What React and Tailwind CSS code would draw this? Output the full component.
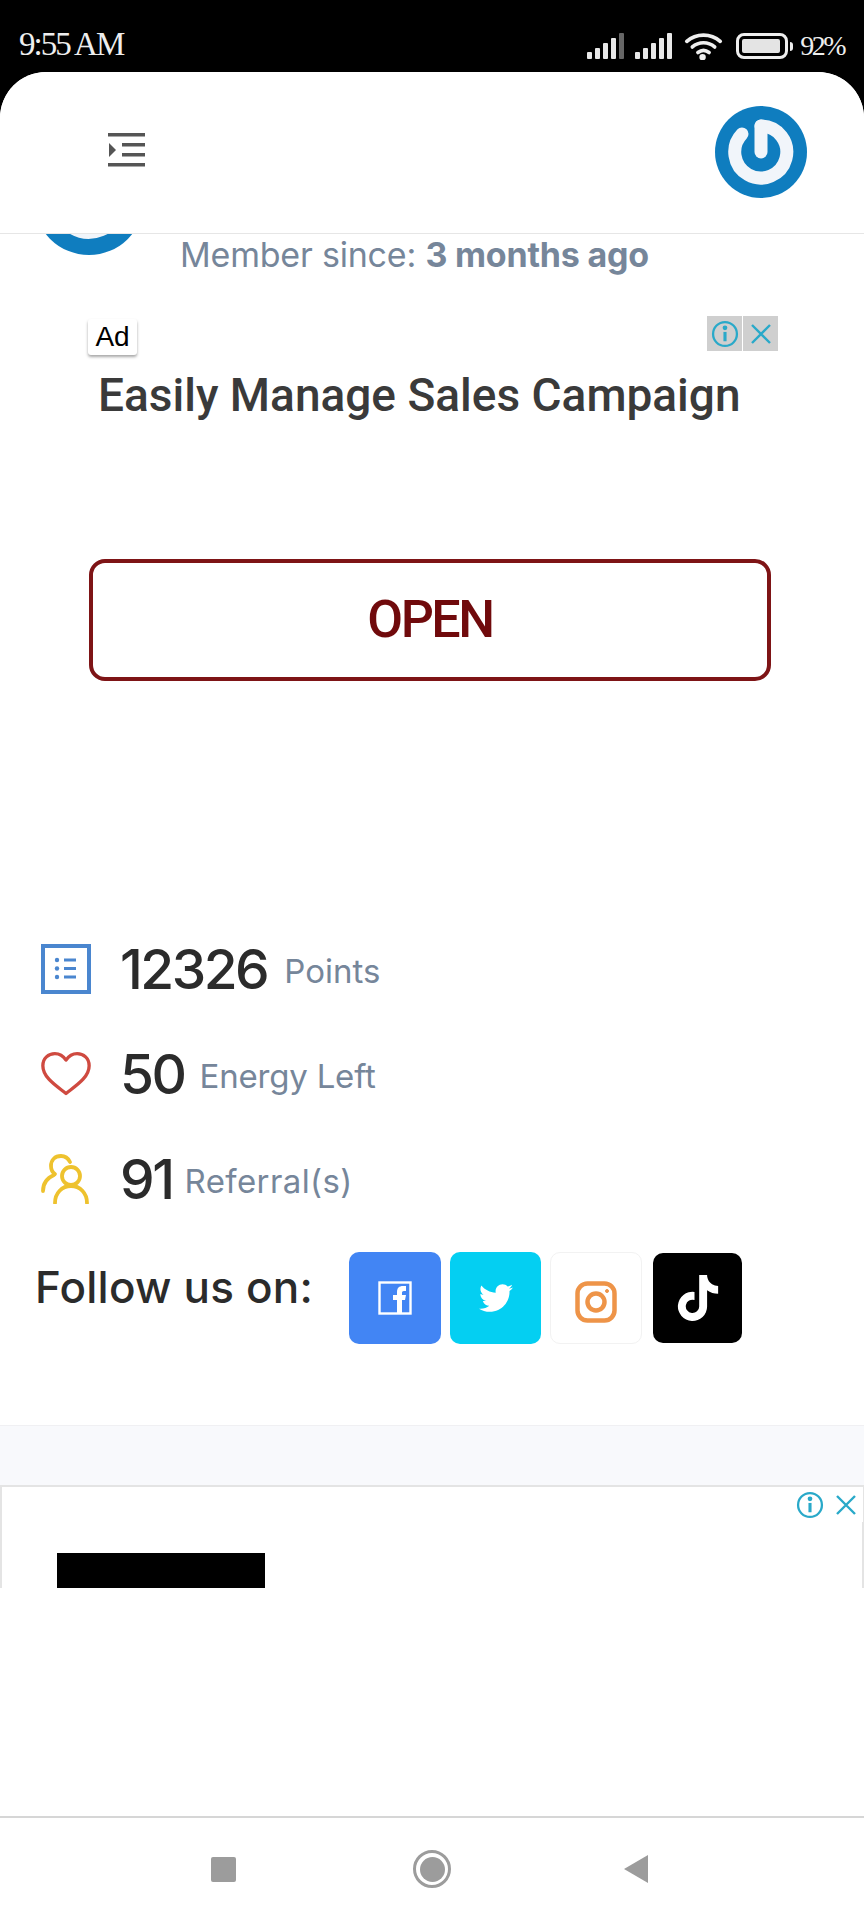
import { FaTwitter, FaTiktok } from "react-icons/fa";

function Signal({ dim }) {
  const bars = [8, 14, 20, 26, 32];
  return (
    <div className="flex items-end gap-[3px]">
      {bars.map((h, i) => (
        <div
          key={h}
          className={`w-[5px] rounded-[1px] ${dim && i === 4 ? "bg-[#666]" : "bg-[#e8e8e8]"}`}
          style={{ height: h * 0.8 }}
        />
      ))}
    </div>
  );
}

function Wifi() {
  return (
    <svg width="39" height="28" viewBox="0 0 42 30" fill="none" stroke="#eee" strokeWidth="4" strokeLinecap="round">
      <path d="M3 10c10-9 26-9 36 0" />
      <path d="M9 16c7-6 17-6 24 0" />
      <path d="M15 22c4-3 8-3 12 0" />
      <circle cx="20" cy="27" r="1.500" fill="#eee" />
    </svg>
  );
}

function Battery() {
  return (
    <div className="flex items-center gap-[2px]">
      <div className="w-[52px] h-[26px] rounded-[8px] border-[3px] border-[#eee] p-[3px]">
        <div className="w-[38px] h-full bg-[#e4e4e4] rounded-[2px]" />
      </div>
      <div className="w-[3px] h-[9px] bg-[#eee] rounded-r-sm" />
    </div>
  );
}

function PowerLogo({ size = 92 }) {
  return (
    <svg width={size} height={size} viewBox="0 0 92 92">
      <circle cx="46" cy="46" r="46" fill="#0f7dbf" />
      <path d="M46 20a26 26 0 1 1-19 8" fill="none" stroke="#f1f5fa" strokeWidth="13" strokeLinecap="round" />
      <path d="M46 20v26" fill="none" stroke="#f1f5fa" strokeWidth="13" strokeLinecap="round" />
    </svg>
  );
}

function MenuIcon() {
  return (
    <svg width="38" height="34" viewBox="0 0 38 34" fill="#555">
      <rect x="0" y="0" width="37" height="3.500" />
      <rect x="14" y="10" width="23" height="3.500" />
      <rect x="14" y="20" width="23" height="3.500" />
      <rect x="0" y="30" width="37" height="3.500" />
      <path d="M1 10l7 7-7 7z" />
    </svg>
  );
}

function InfoClose({ bg }) {
  return (
    <div className="flex gap-[1px]">
      <div className={`w-[35px] h-[35px] flex items-center justify-center ${bg}`}>
        <svg width="28" height="28" viewBox="0 0 27 27" fill="none" stroke="#29a9c9" strokeWidth="2.200">
          <circle cx="13.500" cy="13.500" r="11.500" />
          <path d="M13.500 11.500v9" strokeWidth="3" />
          <circle cx="13.500" cy="7.500" r="1.200" fill="#29a9c9" />
        </svg>
      </div>
      <div className={`w-[35px] h-[35px] flex items-center justify-center ${bg}`}>
        <svg width="24" height="24" viewBox="0 0 24 24" fill="none" stroke="#29a9c9" strokeWidth="2.400">
          <path d="M3 3l18 18M21 3L3 21" />
        </svg>
      </div>
    </div>
  );
}

function ListIcon() {
  return (
    <svg width="50" height="50" viewBox="0 0 50 50" fill="none">
      <rect x="2" y="2" width="46" height="46" stroke="#4a86cf" strokeWidth="4" />
      <g fill="#4a86cf">
        <circle cx="16" cy="16" r="2.200" />
        <circle cx="16" cy="24.500" r="2.200" />
        <circle cx="16" cy="33" r="2.200" />
        <rect x="23" y="14.500" width="12" height="3" />
        <rect x="23" y="23" width="12" height="3" />
        <rect x="23" y="31.500" width="12" height="3" />
      </g>
    </svg>
  );
}

function HeartIcon() {
  return (
    <svg width="54" height="48" viewBox="0 0 54 48" fill="none" stroke="#cf4a40" strokeWidth="3.600" strokeLinejoin="round">
      <path d="M27 45C17 37 2 28 2 15 2 7 8 2 15 2c5 0 9 2.500 12 7 3-4.500 7-7 12-7 7 0 13 5 13 13 0 13-15 22-25 30z" />
    </svg>
  );
}

function UsersIcon() {
  return (
    <svg width="50" height="50" viewBox="0 0 50 50" fill="none" stroke="#eec22e" strokeWidth="3.800" strokeLinecap="round">
      <circle cx="30" cy="22" r="9" />
      <path d="M14 49c0-10 7-17 16-17s16 7 16 17" />
      <path d="M29 8c-2-4-5-6-9-6-6 0-10 4-10 10 0 3 1 6 4 8" />
      <path d="M2 37c0-7 4-13 11-16" />
    </svg>
  );
}

function FbIcon() {
  return (
    <svg width="34" height="34" viewBox="0 0 34 34" fill="none">
      <rect x="1.500" y="1.500" width="31" height="31" stroke="#fff" strokeWidth="2.400" />
      <path d="M19 33V19h-4v-5h4v-3c0-4 2-6 6-6h3v5h-2c-2 0-2 1-2 2v2h4l-1 5h-3v14z" fill="#fff" />
    </svg>
  );
}

function InstaIcon() {
  return (
    <svg className="mt-[7px]" width="42" height="42" viewBox="0 0 42 42" fill="none" stroke="#ee9448" strokeWidth="4.500">
      <rect x="2.500" y="2.500" width="37" height="37" rx="10" />
      <circle cx="21" cy="21" r="8.500" />
      <circle cx="32" cy="10" r="1.500" fill="#ee9448" strokeWidth="1" />
    </svg>
  );
}

function StatRow({ icon, value, label, labelClass }) {
  return (
    <div className="flex items-center h-[50px]">
      <div className="w-[50px] flex justify-center shrink-0">{icon}</div>
      <span className="ml-[29px] text-[55px] leading-none font-medium text-[#2b2b2b] tracking-[-2.500px]">{value}</span>
      <span className={`mt-[5px] text-[33px] leading-none text-[#76869a] ${labelClass}`}>{label}</span>
    </div>
  );
}

function NavRow() {
  return (
    <div className="h-[104px] border-t-2 border-[#d6d6d6] bg-white flex items-center pl-[211px]">
      <div className="w-[25px] h-[25px] bg-[#9c9c9c] rounded-[2px]" />
      <div className="ml-[177px] w-[38px] h-[38px] rounded-full border-[3px] border-[#9c9c9c] flex items-center justify-center">
        <div className="w-[25px] h-[25px] rounded-full bg-[#9c9c9c]" />
      </div>
      <svg className="ml-[173px]" width="24" height="28" viewBox="0 0 24 28" fill="#9c9c9c">
        <path d="M24 0v28L0 14z" />
      </svg>
    </div>
  );
}

export default function App() {
  return (
    <div className="w-[864px] h-[1920px] bg-black font-['Inter','Noto_Sans',sans-serif] overflow-hidden">
      {/* status bar */}
      <div className="h-[72px] flex items-start justify-between pl-[19px] pr-[20px] pt-[24px] text-[#eee] font-['Liberation_Serif',serif]">
        <span className="text-[33px] leading-[40px] tracking-[-2px]">9:55 AM</span>
        <div className="flex items-center h-[44px]">
          <Signal dim />
          <div className="ml-[11px]"><Signal /></div>
          <div className="ml-[12px]"><Wifi /></div>
          <div className="ml-[13px]"><Battery /></div>
          <span className="ml-[7px] text-[28px] leading-none tracking-[-2.500px]">92%</span>
        </div>
      </div>

      <div className="h-[1848px] bg-white rounded-t-[46px] overflow-hidden flex flex-col">
        {/* top bar */}
        <div className="h-[162px] shrink-0 flex items-center justify-between pl-[108px] pr-[57px] border-b border-[#e6e6e6] relative z-10 bg-white">
          <div className="mt-[-6px]"><MenuIcon /></div>
          <div className="mt-[-2px]"><PowerLogo /></div>
        </div>

        {/* profile sliver */}
        <div className="h-[68px] shrink-0 flex items-start pl-[34px]">
          <div className="w-[110px] h-[110px] mt-[-89px] shrink-0"><PowerLogo size={110} /></div>
          <p className="ml-[36px] mt-[1px] text-[34px] leading-[40px] text-[#76869a] tracking-[-0.200px] whitespace-nowrap">
            Member since: <span className="font-bold">3 months ago</span>
          </p>
        </div>

        {/* ad */}
        <div className="h-[246px] shrink-0 pl-[88px] pr-[86px] pt-[14px]">
          <div className="flex items-start justify-between">
            <div className="w-[49px] h-[36px] mt-[3px] bg-white rounded-[3px] shadow-[0_2px_3px_rgba(0,0,0,0.35)] flex items-center justify-center font-['Liberation_Sans',sans-serif] text-[28px] text-black">
              Ad
            </div>
            <InfoClose bg="bg-[#cfcfcf]" />
          </div>
          <p className="mt-[12px] ml-[10px] font-['Roboto',sans-serif] font-medium text-[46px] leading-[56px] text-[#3a3a3a] whitespace-nowrap">
            Easily Manage Sales Campaign
          </p>
        </div>
        <div className="ml-[89px] mr-[93px] h-[122px] shrink-0 mt-[11px] rounded-[16px] border-4 border-[#7e1416] flex items-center justify-center font-['Roboto',sans-serif] font-medium text-[52px] tracking-[-2.500px] text-[#700a0c]">
          OPEN
        </div>

        {/* stats */}
        <div className="pl-[41px] mt-[263px] shrink-0 flex flex-col gap-[55px]">
          <StatRow icon={<ListIcon />} value="12326" label="Points" labelClass="ml-[17px]" />
          <StatRow icon={<HeartIcon />} value="50" label="Energy Left" labelClass="ml-[15px] tracking-[-0.200px]" />
          <StatRow icon={<UsersIcon />} value="91" label="Referral(s)" labelClass="ml-[12px] tracking-[0.400px]" />
        </div>

        {/* follow */}
        <div className="mt-[48px] pl-[35px] shrink-0 flex items-start">
          <span className="text-[44px] leading-[50px] mt-[10px] text-[#2b2b2b] font-medium tracking-[0.200px] w-[314px] whitespace-nowrap">Follow us on:</span>
          <div className="flex items-center gap-[9px]">
            <div className="w-[92px] h-[92px] rounded-[10px] bg-[#4285f4] flex items-center justify-center"><FbIcon /></div>
            <div className="w-[91px] h-[92px] rounded-[10px] bg-[#04cff2] flex items-center justify-center"><FaTwitter className="text-white text-[34px]" /></div>
            <div className="w-[92px] h-[92px] rounded-[10px] border border-[#f2f2f2] flex items-center justify-center"><InstaIcon /></div>
            <div className="ml-[2px] w-[89px] h-[90px] rounded-[10px] bg-black flex items-center justify-center"><FaTiktok className="text-white text-[46px]" /></div>
          </div>
        </div>

        {/* gray band and bottom ad */}
        <div className="mt-[81px] h-[60px] shrink-0 bg-[#f8f9fc] border-t border-[#f0f0f3]" />
        <div className="h-[103px] shrink-0 border-t-2 border-x-2 border-[#e4e4e4] relative pt-[66px] pl-[55px]">
          <div className="absolute top-0 right-[-1px]"><InfoClose bg="bg-white" /></div>
          <div className="w-[208px] h-[35px] bg-black" />
        </div>
        <div className="flex-1 bg-white" />
        <NavRow />
      </div>
    </div>
  );
}
